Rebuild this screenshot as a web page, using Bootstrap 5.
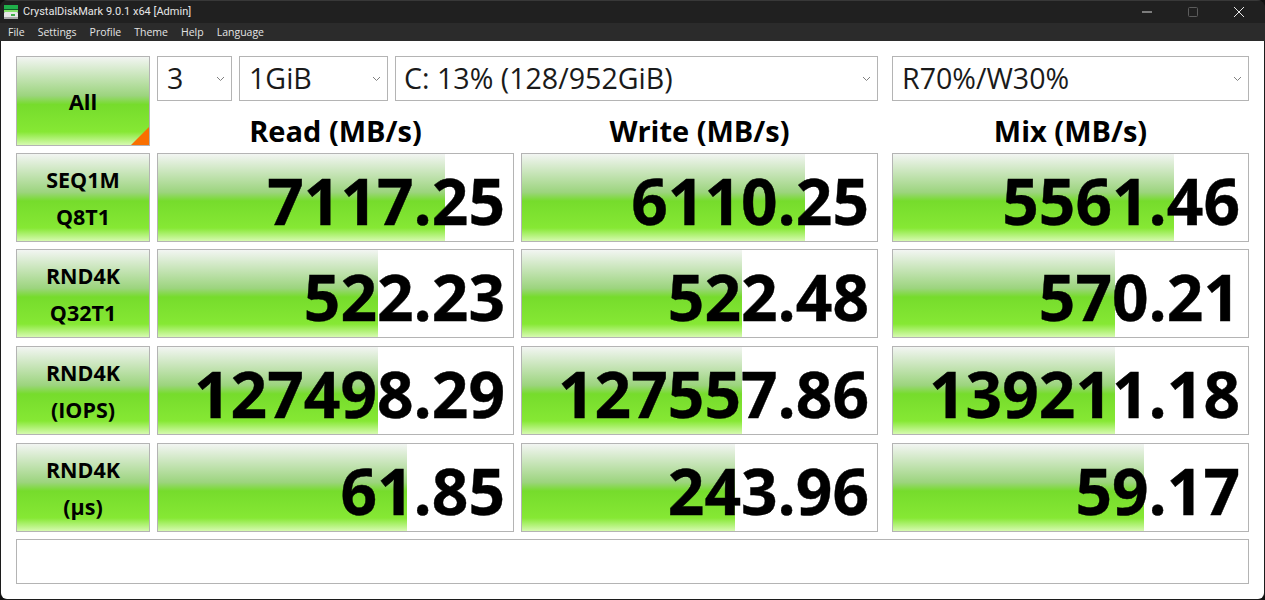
<!DOCTYPE html>
<html lang="en">
<head>
<meta charset="UTF-8">
<title>CrystalDiskMark 9.0.1 x64 [Admin]</title>
<link rel="stylesheet" href="https://cdn.jsdelivr.net/npm/bootstrap@5.3.0/dist/css/bootstrap.min.css">
<style>
html, body { height: 600px; overflow: hidden; background: #111; }
body { font-family: "Open Sans", "Noto Sans", sans-serif; color: #000; }
.app-window { width: 1265px; height: 600px; background: #1c1c1c; border-radius: 8px; overflow: hidden; }
.title-bar { height: 23px; background: #202020; border-top: 1px solid #383838; color: #e6e6e6; font-family: Roboto, sans-serif; font-size: 11px; padding-left: 3px; gap: 4px; }
.win-btn { width: 46px; height: 22px; }
.win-btns { margin-right: 3px; }
.menu-bar { height: 18px; background: #2b2b2b; color: #e4e4e4; font-size: 10.5px; padding-left: 8px; padding-top: 2px; gap: 13px; }
.client-area { height: 558px; margin-left: 1px; margin-right: 1px; background: #fff; padding: 15px 15px 0 15px; border-radius: 0 0 6px 6px; }
.top-side { gap: 7px; }
.test-btn, .score-cell, .select-box, .status-box { border: 1px solid #b4b4b4; }
.test-btn { width: 134px; flex-shrink: 0; background: linear-gradient(#f2f5f2 0%, #9cd47e 44%, #76dc2c 54%, #86e834 85%, #d6fab0 100%); position: relative; font-weight: 700; font-size: 21.5px; line-height: 37px; text-align: center; padding-top: 7px; }
.btn-all { height: 90px; font-size: 22px; padding-top: 0; }
.corner-mark { position: absolute; right: 0; bottom: 0; width: 0; height: 0; border-left: 18px solid transparent; border-bottom: 18px solid #f96f00; }
.select-row { height: 45px; gap: 7px; }
.select-box { height: 45px; background: #fff; font-size: 28.6px; padding-left: 9px; padding-right: 6px; color: #1a1a1a; }
.sel-count { width: 75px; }
.sel-size { width: 149px; }
.sel-drive { width: 483px; padding-left: 8px; }
.sel-mix { width: 357px; margin-left: 7px; }
.head-row { height: 45px; gap: 7px; }
.col-head { width: 357px; text-align: center; font-weight: 700; font-size: 29px; line-height: 60px; }
.col-head.mix-col, .score-cell.mix-col { margin-left: 7px; }
.result-row { height: 89px; gap: 7px; }
.score-cell { width: 357px; height: 89px; position: relative; background: #fff; }
.score-fill { position: absolute; left: 0; top: 0; bottom: 0; background: linear-gradient(#f2f5f2 0%, #9cd47e 44%, #76dc2c 54%, #86e834 85%, #d6fab0 100%); }
.score-num { position: absolute; right: 8px; top: 0; bottom: 0; font-weight: 700; font-size: 64px; line-height: 93px; -webkit-text-stroke: 0.4px #000; }
.status-box { height: 45px; width: 1233px; background: #fff; }
</style>
</head>
<body>
<div class="app-window">
  <div class="title-bar d-flex align-items-center">
    <svg width="16" height="16" viewBox="0 0 16 16">
      <rect x="1" y="1" width="14" height="4" fill="#1fae4a"/>
      <rect x="1" y="5" width="14" height="1" fill="#0f5a28"/>
      <rect x="1" y="6" width="14" height="2" fill="#86e06a"/>
      <rect x="1" y="8" width="14" height="7" rx="1" fill="#e6e6e6"/>
      <rect x="1" y="13" width="14" height="2" fill="#a8a8a8"/>
      <rect x="8" y="10" width="4" height="2" fill="#3fae4a"/>
    </svg>
    <span>CrystalDiskMark 9.0.1 x64 [Admin]</span>
    <div class="win-btns ms-auto d-flex">
      <div class="win-btn d-flex align-items-center justify-content-center">
        <svg width="10" height="10" viewBox="0 0 10 10"><path d="M0 5H10" stroke="#d8d8d8"/></svg>
      </div>
      <div class="win-btn d-flex align-items-center justify-content-center">
        <svg width="10" height="10" viewBox="0 0 10 10"><rect x=".5" y=".5" width="9" height="9" rx="1" fill="none" stroke="#5c5c5c"/></svg>
      </div>
      <div class="win-btn d-flex align-items-center justify-content-center">
        <svg width="10" height="10" viewBox="0 0 10 10"><path d="M0 0L10 10M10 0L0 10" stroke="#e8e8e8"/></svg>
      </div>
    </div>
  </div>
  <div class="menu-bar d-flex align-items-center">
    <span>File</span><span>Settings</span><span>Profile</span><span>Theme</span><span>Help</span><span>Language</span>
  </div>
  <div class="client-area">
    <div class="d-flex top-side">
      <div class="test-btn btn-all d-flex align-items-center justify-content-center">All<span class="corner-mark"></span></div>
      <div>
        <div class="d-flex select-row">
          <div class="select-box sel-count d-flex align-items-center justify-content-between"><span>3</span><svg width="9" height="6" viewBox="0 0 9 6"><path d="M1 1L4.500 4.500L8 1" fill="none" stroke="#808080"/></svg></div>
          <div class="select-box sel-size d-flex align-items-center justify-content-between"><span>1GiB</span><svg width="9" height="6" viewBox="0 0 9 6"><path d="M1 1L4.500 4.500L8 1" fill="none" stroke="#808080"/></svg></div>
          <div class="select-box sel-drive d-flex align-items-center justify-content-between"><span>C: 13% (128/952GiB)</span><svg width="9" height="6" viewBox="0 0 9 6"><path d="M1 1L4.500 4.500L8 1" fill="none" stroke="#808080"/></svg></div>
          <div class="select-box sel-mix d-flex align-items-center justify-content-between"><span>R70%/W30%</span><svg width="9" height="6" viewBox="0 0 9 6"><path d="M1 1L4.500 4.500L8 1" fill="none" stroke="#808080"/></svg></div>
        </div>
        <div class="d-flex head-row">
          <div class="col-head">Read (MB/s)</div>
          <div class="col-head">Write (MB/s)</div>
          <div class="col-head mix-col">Mix (MB/s)</div>
        </div>
      </div>
    </div>
    <div class="d-flex result-row" style="margin-top:7px">
      <div class="test-btn">SEQ1M<br>Q8T1</div>
      <div class="score-cell"><div class="score-fill" style="width:287px"></div><div class="score-num">7117.25</div></div>
      <div class="score-cell"><div class="score-fill" style="width:283px"></div><div class="score-num">6110.25</div></div>
      <div class="score-cell mix-col"><div class="score-fill" style="width:281px"></div><div class="score-num">5561.46</div></div>
    </div>
    <div class="d-flex result-row" style="margin-top:7px">
      <div class="test-btn">RND4K<br>Q32T1</div>
      <div class="score-cell"><div class="score-fill" style="width:220px"></div><div class="score-num">522.23</div></div>
      <div class="score-cell"><div class="score-fill" style="width:220px"></div><div class="score-num">522.48</div></div>
      <div class="score-cell mix-col"><div class="score-fill" style="width:222px"></div><div class="score-num">570.21</div></div>
    </div>
    <div class="d-flex result-row" style="margin-top:8px">
      <div class="test-btn">RND4K<br>(IOPS)</div>
      <div class="score-cell"><div class="score-fill" style="width:220px"></div><div class="score-num">127498.29</div></div>
      <div class="score-cell"><div class="score-fill" style="width:220px"></div><div class="score-num">127557.86</div></div>
      <div class="score-cell mix-col"><div class="score-fill" style="width:222px"></div><div class="score-num">139211.18</div></div>
    </div>
    <div class="d-flex result-row" style="margin-top:8px">
      <div class="test-btn">RND4K<br>(μs)</div>
      <div class="score-cell"><div class="score-fill" style="width:249px"></div><div class="score-num">61.85</div></div>
      <div class="score-cell"><div class="score-fill" style="width:213px"></div><div class="score-num">243.96</div></div>
      <div class="score-cell mix-col"><div class="score-fill" style="width:251px"></div><div class="score-num">59.17</div></div>
    </div>
    <div class="status-box" style="margin-top:7px"></div>
  </div>
</div>
<script src="https://cdn.jsdelivr.net/npm/bootstrap@5.3.0/dist/js/bootstrap.bundle.min.js"></script>
</body>
</html>
